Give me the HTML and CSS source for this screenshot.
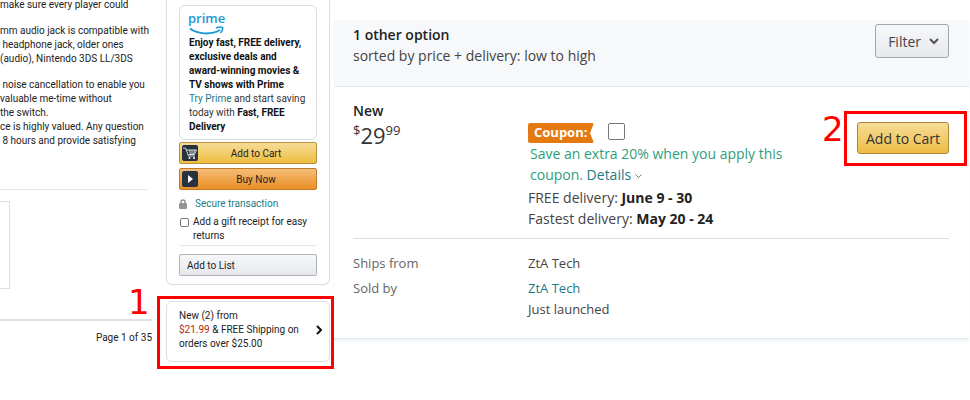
FILE: index.html
```html
<!DOCTYPE html>
<html lang="en">
<head>
    <meta charset="UTF-8">
    <meta name="viewport" content="width=device-width, initial-scale=1.0">
    <title>Buying Options</title>
    <link rel="stylesheet" href="styles.css">
</head>
<body>
    <div class="page">
        <div class="details">
            <div class="bullets">
                <p>make sure every player could</p>
                <p>mm audio jack is compatible with<br> headphone jack, older ones<br>(audio), Nintendo 3DS LL/3DS</p>
                <p> noise cancellation to enable you<br>valuable me-time without<br>the switch.<br>ce is highly valued. Any question<br> 8 hours and provide satisfying</p>
            </div>
            <div class="thumb"></div>
            <div class="pager">Page 1 of 35</div>
        </div>

        <div class="buy">
            <div class="buy-box">
                <div class="prime-box">
                    <svg class="prime-logo" width="36" height="23" viewBox="0 0 36 23" role="img" aria-label="prime">
                        <text x="-1" y="10" class="prime-word">prime</text>
                        <path d="M1 15.500 C9 21.500 22 22 31 17" fill="none" stroke="#1a98d5" stroke-width="2"/>
                        <path d="M27 15 C30 13.500 33 14 33.500 14.500 C34 16 33 18.500 31.500 20" fill="none" stroke="#1a98d5" stroke-width="1.500"/>
                    </svg>
                    <p><b>Enjoy fast, FREE delivery,<br>exclusive deals and<br>award-winning movies &amp;<br>TV shows with Prime</b><br><a href="#">Try Prime</a> and start saving<br>today with <b>Fast, FREE<br>Delivery</b></p>
                </div>
                <button class="btn btn-cart">
                    <span class="btn-icon">
                        <svg width="16" height="16" viewBox="0 0 16 16" fill="none" stroke="#fff">
                            <path d="M1 3h2.500l3 8h6.500M4.500 5h10l-2 4.500h-6M7.500 5l1 4.500M10 5v4.500M12.500 5l-1 4.500" stroke-width=".8"/>
                            <circle cx="7.500" cy="13" r="1" fill="#fff" stroke="none"/>
                            <circle cx="12" cy="13" r="1" fill="#fff" stroke="none"/>
                        </svg>
                    </span>
                    <span class="btn-text">Add to Cart</span>
                </button>
                <button class="btn btn-buy">
                    <span class="btn-icon">
                        <svg width="16" height="16" viewBox="0 0 16 16"><path d="M6 4l5 4-5 4z" fill="#fff"/></svg>
                    </span>
                    <span class="btn-text">Buy Now</span>
                </button>
                <div class="secure">
                    <svg width="8" height="10" viewBox="0 0 8 10">
                        <path d="M2 5V3a2 2 0 0 1 4 0v2" fill="none" stroke="#949494" stroke-width="1.500"/>
                        <rect x="0" y="4" width="8" height="6" rx="1" fill="#949494"/>
                    </svg>
                    <a href="#">Secure transaction</a>
                </div>
                <label class="gift"><input type="checkbox" class="check"><span>Add a gift receipt for easy<br>returns</span></label>
                <button class="btn btn-list">Add to List</button>
            </div>
            <div class="offer-wrap">
                <a class="offer" href="#">
                    <span>New (2) from<br><span class="price-red">$21.99</span> &amp; FREE Shipping on<br>orders over $25.00</span>
                    <svg width="6" height="10" viewBox="0 0 6 10"><path d="M1 1l4 4-4 4" fill="none" stroke="#111" stroke-width="2"/></svg>
                </a>
                <div class="mark mark-one"></div>
                <div class="num num-one">1</div>
            </div>
        </div>

        <div class="panel">
            <div class="panel-head">
                <div>
                    <h5>1 other option</h5>
                    <p>sorted by price + delivery: low to high</p>
                </div>
                <button class="filter">Filter
                    <svg width="10" height="7" viewBox="0 0 10 7"><path d="M1 1l4 4 4-4" fill="none" stroke="#555" stroke-width="2"/></svg>
                </button>
            </div>
            <div class="option">
                <div>
                    <h5>New</h5>
                    <div class="price"><span class="small">$</span><span class="whole">29</span><span class="small">99</span></div>
                </div>
                <div class="option-info">
                    <div class="coupon">
                        <label class="coupon-tag" for="coupon">Coupon:</label>
                        <input type="checkbox" class="check check-big" id="coupon">
                    </div>
                    <p class="save">Save an extra 20% when you apply this<br>coupon. <a href="#">Details <svg class="caret" width="7" height="5" viewBox="0 0 7 5"><path d="M.5 .5l3 3 3-3" fill="none" stroke="#777"/></svg></a></p>
                    <p>FREE delivery: <b>June 9 - 30</b></p>
                    <p>Fastest delivery: <b>May 20 - 24</b></p>
                </div>
                <div class="cart-wrap">
                    <button class="cart">Add to Cart</button>
                    <div class="mark mark-two"></div>
                    <div class="num num-two">2</div>
                </div>
            </div>
            <dl class="seller">
                <dt>Ships from</dt>
                <dd>ZtA Tech</dd>
                <dt>Sold by</dt>
                <dd><a href="#">ZtA Tech</a><br>Just launched</dd>
            </dl>
        </div>
    </div>
</body>
</html>
```
FILE: styles.css
```css
* { box-sizing: border-box; }
body { margin: 0; min-height: 100vh; font-family: Roboto, "Open Sans", sans-serif; font-size: 10px; line-height: 14px; color: #222; background: #fff; }
p, h5, dl, dd { margin: 0; }
a { color: #1b7a8c; text-decoration: none; }
button { font-family: inherit; color: #222; cursor: pointer; }
.page { display: grid; grid-template-columns: 152px 164px 1fr; column-gap: 14px; align-items: start; }

/* product details */
.details { margin-top: -2px; }
.bullets { display: flex; flex-direction: column; gap: 12px; width: 148px; height: 192px; border-bottom: 1px solid #e7e7e7; }
.bullets p { white-space: pre; }
.thumb { width: 10px; height: 88px; margin-top: 11px; border: 1px solid #ddd; border-left: 0; }
.pager { margin-top: 30px; padding-top: 10px; border-top: 2px solid #e2e2e2; text-align: right; }

/* buy box */
.buy-box { display: flex; flex-direction: column; padding: 5px 12px 8px; border: 1px solid #ddd; border-top: 0; border-radius: 0 0 6px 6px; }
.prime-box { height: 135px; padding: 7px 9px; border: 1px solid #ddd; border-radius: 6px; }
.prime-box p { color: #333; white-space: nowrap; }
.prime-box b { color: #111; }
.prime-logo { display: block; overflow: visible; }
.prime-word { font: 600 13px "Open Sans", sans-serif; fill: #1a98d5; }
.btn { display: flex; align-items: center; width: 100%; height: 22px; padding: 0 2px; border: 1px solid #b8923a; border-radius: 2px; font-size: 10px; }
.btn-cart { margin-top: 2px; background: linear-gradient(#f6dc98, #eebd3e); }
.btn-buy { margin-top: 4px; border-color: #c07a2c; background: linear-gradient(#f5bd78, #ea8f24); }
.btn-list { margin-top: 8px; padding-left: 7px; border-color: #aeb2b9; background: linear-gradient(#f6f7f9, #e6e8ec); }
.btn-icon { display: flex; width: 16px; height: 16px; border-radius: 2px; background: #28323e; }
.btn-text { flex: 1; text-align: center; }
.secure { display: flex; align-items: center; gap: 8px; margin-top: 7px; }
.gift { display: flex; align-items: flex-start; gap: 4px; margin-top: 4px; padding: 0 0 2px 1px; border-bottom: 1px solid #e7e7e7; }
.check { appearance: none; flex: none; width: 9px; height: 9px; margin: 3px 0 0; border: 1px solid #777; border-radius: 2px; background: #fff; }
.offer-wrap { position: relative; margin-top: 16px; }
.offer { display: flex; align-items: center; justify-content: space-between; height: 61px; padding: 0 7px 4px 12px; border: 1px solid #ddd; border-radius: 6px; color: #222; white-space: nowrap; }
.price-red { color: #b12704; }

/* red markers */
.mark { position: absolute; border: 3px solid #f00; pointer-events: none; }
.mark-one { inset: -5px -4px -7px -9px; }
.mark-two { inset: -11px -18px -12px -13px; }
.num { position: absolute; font: 34px/34px "DejaVu Sans", sans-serif; color: #f00; }
.num-one { left: -38px; top: -16px; }
.num-two { left: -35px; top: -10px; }

/* all offers panel */
.panel { margin: 20px 1px 0 -10px; font-family: "Open Sans", "Noto Sans", sans-serif; font-size: 14px; line-height: 21px; color: #444; border-bottom: 1px solid #dfe8ec; box-shadow: 0 2px 2px #eef3f5; }
.panel h5 { font-size: 14px; font-weight: 600; color: #222; }
.panel-head { display: flex; justify-content: space-between; align-items: flex-start; height: 67px; padding: 4px 20px 0 19px; background: #f7f8fa; border-bottom: 1px solid #dfe8ec; }
.filter { display: flex; align-items: center; gap: 8px; height: 34px; padding: 0 9px 0 12px; border: 1px solid #a2a6ac; border-radius: 3px; background: linear-gradient(#f7f8fa, #e7e9ec); font-size: 14px; color: #444; }
.option { display: grid; grid-template-columns: 175px 260px 1fr; margin: 0 20px 0 19px; padding: 13px 0 9px; border-bottom: 1px solid #ddd; }
.price { display: flex; align-items: flex-start; color: #333; }
.price .small { font-size: 13px; line-height: 19px; }
.price .whole { font-size: 22px; line-height: 28px; }
.option-info { padding-top: 23px; }
.option-info b { color: #222; }
.coupon { display: flex; gap: 14px; height: 20px; }
.coupon-tag { width: 66px; padding-left: 6px; line-height: 19px; font-size: 13px; font-weight: bold; color: #fff; background: #e47911; border-radius: 2px; clip-path: polygon(0 0, 100% 0, 94% 50%, 100% 100%, 0 100%); }
.check-big { width: 17px; height: 17px; margin: 0; }
.save { margin-bottom: 2px; padding-left: 2px; color: #2f9e7c; white-space: nowrap; }
.caret { vertical-align: middle; }
.cart-wrap { position: relative; justify-self: end; align-self: start; margin-top: 22px; }
.cart { display: block; height: 32px; padding: 0 8px; border: 1px solid #a88734; border-radius: 3px; background: linear-gradient(#f6dc98, #eebd45); font-size: 14px; color: #333; }
.seller { display: grid; grid-template-columns: 175px 1fr; row-gap: 4px; padding: 14px 19px 18px; font-size: 13px; }
.seller dt { color: #666; }
```
